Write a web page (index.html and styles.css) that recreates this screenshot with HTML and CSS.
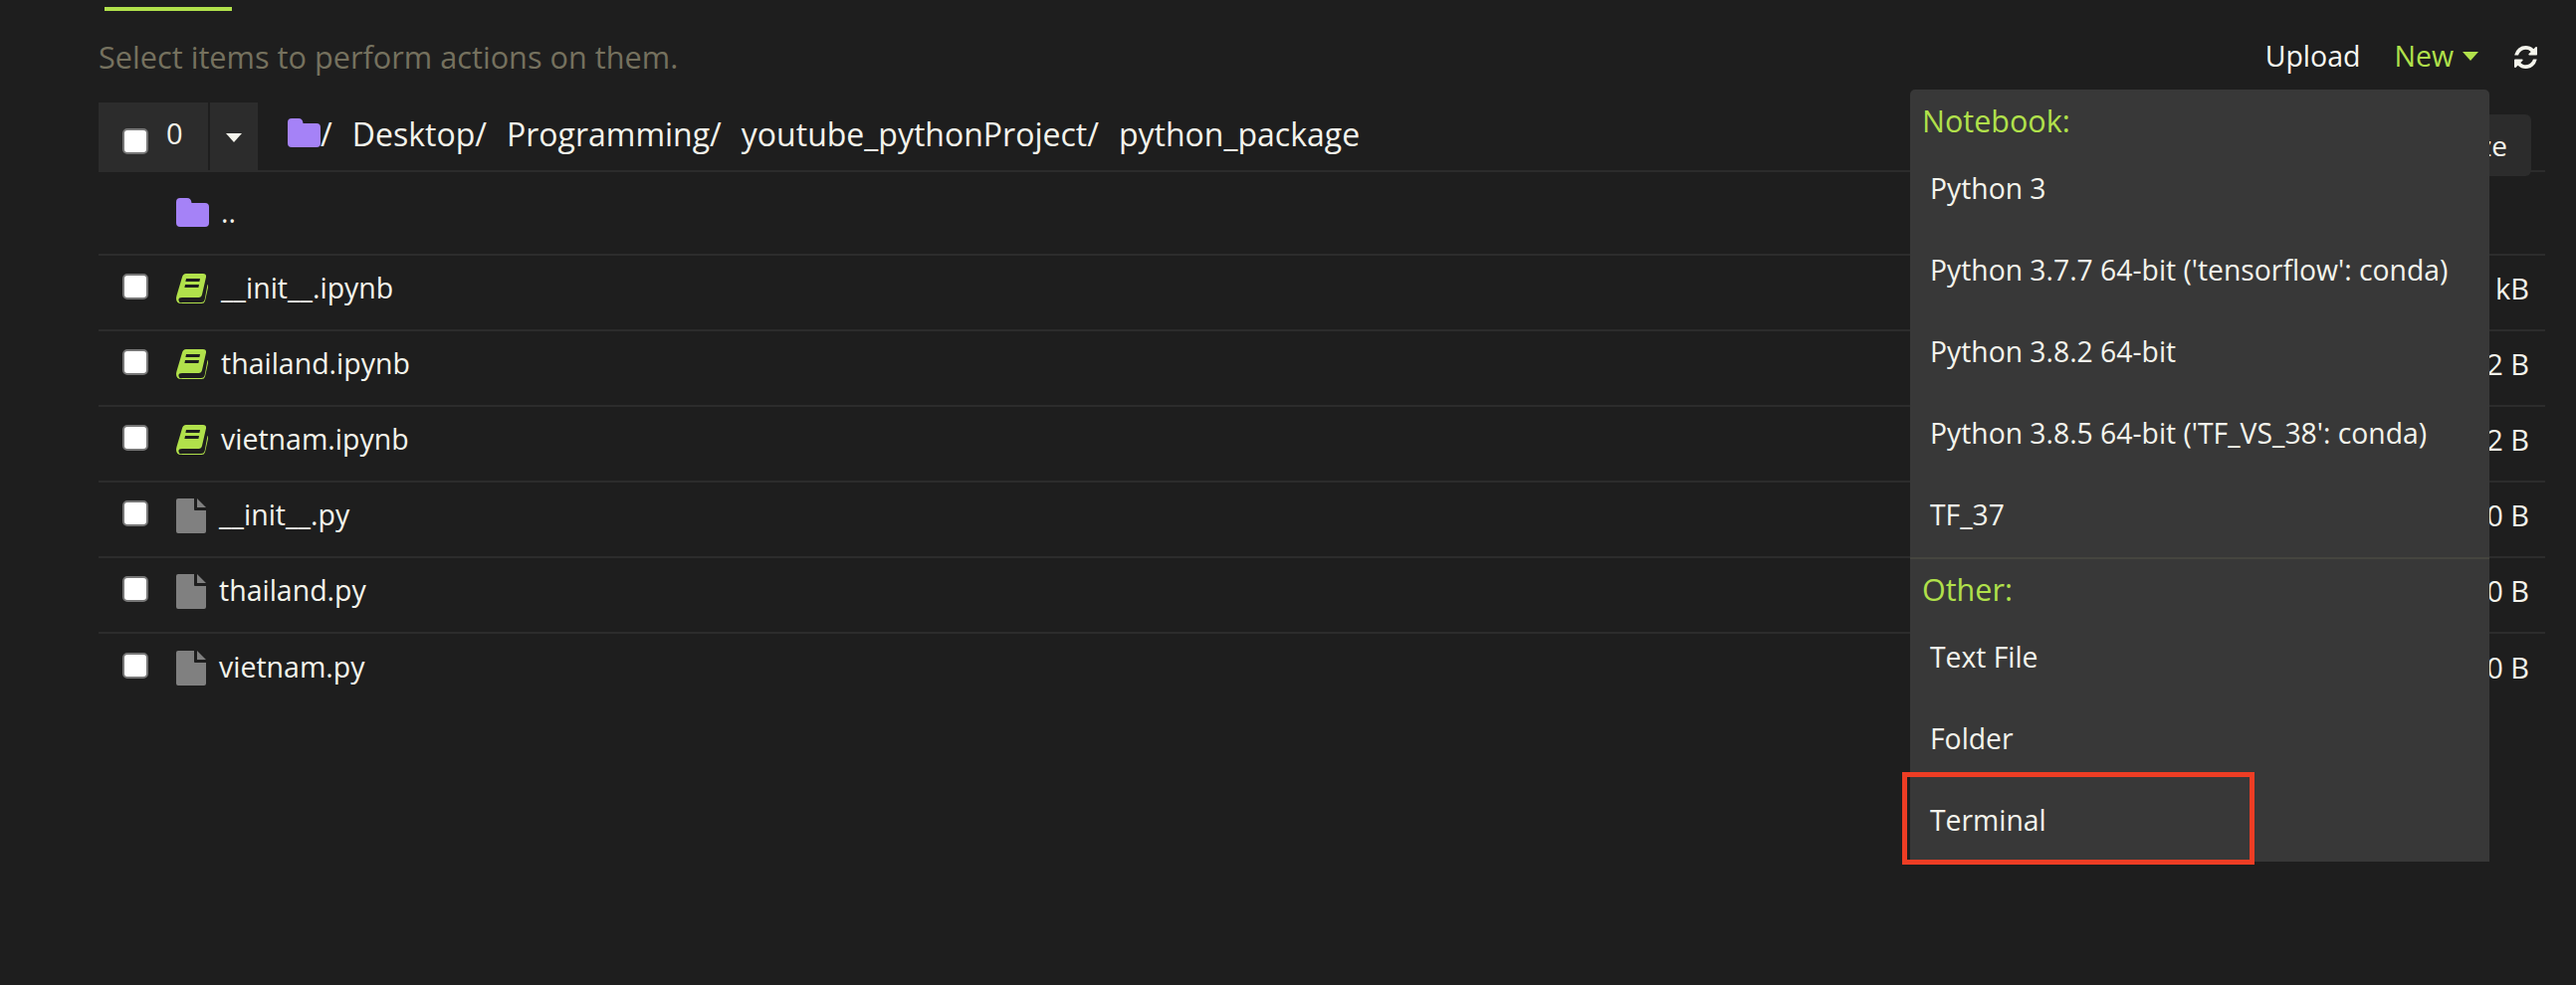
FILE: index.html
```html
<!DOCTYPE html>
<html lang="en">
<head>
<meta charset="utf-8">
<title>Files</title>
<link rel="stylesheet" href="styles.css">
</head>
<body>
<div class="page">
  <div class="tabs"><span class="tab-active"></span></div>
  <div class="toolbar">
    <span class="hint">Select items to perform actions on them.</span>
    <div class="actions">
      <span class="action">Upload</span>
      <span class="action new">New<span class="caret caret-green"></span></span>
      <svg class="refresh" viewBox="0 0 1536 1536"><path fill="#f4f4ec" d="M1511 928q0 5-1 7-64 268-268 434.500t-478 166.500q-146 0-282.500-55t-243.500-157l-129 129q-19 19-45 19t-45-19-19-45v-448q0-26 19-45t45-19h448q26 0 45 19t19 45-19 45l-137 137q71 66 161 102t187 36q134 0 250-65t186-179q11-17 53-117 8-23 30-23h192q13 0 22.500 9.500t9.500 22.500zm25-800v448q0 26-19 45t-45 19h-448q-26 0-45-19t-19-45 19-45l138-138q-148-137-349-137-134 0-250 65t-186 179q-11 17-53 117-8 23-30 23h-199q-13 0-22.500-9.500t-9.500-22.500v-7q65-268 270-434.500t480-166.500q146 0 284 55.500t245 156.500l130-129q19-19 45-19t45 19 19 45z"/></svg>
    </div>
  </div>
  <div class="list">
    <div class="head">
      <div class="select-box"><input type="checkbox" class="check head-check"><span class="count">0</span></div>
      <div class="select-caret"><span class="caret"></span></div>
      <div class="crumbs">
        <svg class="folder crumb-folder" viewBox="0 0 33 29"><path fill="#a582f7" d="M4 0h7q4 0 4.500 5H29q4 0 4 4v16q0 4-4 4H4q-4 0-4-4V4q0-4 4-4z"/></svg>
        <span class="crumb first">/</span><span class="crumb">Desktop/</span><span class="crumb">Programming/</span><span class="crumb">youtube_pythonProject/</span><span class="crumb">python_package</span>
      </div>
      <div class="name-btn">Size</div>
    </div>
    <div class="row up-row">
      <svg class="folder" viewBox="0 0 33 29"><path fill="#a582f7" d="M4 0h7q4 0 4.500 5H29q4 0 4 4v16q0 4-4 4H4q-4 0-4-4V4q0-4 4-4z"/></svg>
      <span class="name">..</span>
    </div>
    <div class="row"><input type="checkbox" class="check"><svg class="book" viewBox="0 0 32 31"><path fill="#b1e14b" d="M10 0h17q3.500 0 3 3.500L26 21q-.6 3-3.500 3H6q-4 0-3.500 3t3.500 2h19q3 0 3.700-3l2.800-15 1 .8-3.500 15.700q-.8 2.500-3.500 2.500H5q-5 0-5-5 0-1 .5-3L6 3.500Q6.800 0 10 0z"/><path fill="#1e1e1e" d="M10 5h14l-.6 3h-14zM9 11h14l-.6 3H8.400z"/></svg><span class="name nb">__init__.ipynb</span><span class="size">3 kB</span></div>
    <div class="row"><input type="checkbox" class="check"><svg class="book" viewBox="0 0 32 31"><path fill="#b1e14b" d="M10 0h17q3.500 0 3 3.500L26 21q-.6 3-3.500 3H6q-4 0-3.500 3t3.500 2h19q3 0 3.700-3l2.800-15 1 .8-3.500 15.700q-.8 2.500-3.500 2.500H5q-5 0-5-5 0-1 .5-3L6 3.500Q6.800 0 10 0z"/><path fill="#1e1e1e" d="M10 5h14l-.6 3h-14zM9 11h14l-.6 3H8.400z"/></svg><span class="name nb">thailand.ipynb</span><span class="size">72 B</span></div>
    <div class="row"><input type="checkbox" class="check"><svg class="book" viewBox="0 0 32 31"><path fill="#b1e14b" d="M10 0h17q3.500 0 3 3.500L26 21q-.6 3-3.500 3H6q-4 0-3.500 3t3.500 2h19q3 0 3.700-3l2.800-15 1 .8-3.500 15.700q-.8 2.500-3.500 2.500H5q-5 0-5-5 0-1 .5-3L6 3.500Q6.800 0 10 0z"/><path fill="#1e1e1e" d="M10 5h14l-.6 3h-14zM9 11h14l-.6 3H8.400z"/></svg><span class="name nb">vietnam.ipynb</span><span class="size">72 B</span></div>
    <div class="row"><input type="checkbox" class="check"><svg class="file" viewBox="0 0 30 35"><path fill="#808080" d="M2 0h16v11q0 1 1 1h11v21q0 2-2 2H2q-2 0-2-2V2q0-2 2-2zM21 0l9 9h-9z"/></svg><span class="name">__init__.py</span><span class="size">0 B</span></div>
    <div class="row"><input type="checkbox" class="check"><svg class="file" viewBox="0 0 30 35"><path fill="#808080" d="M2 0h16v11q0 1 1 1h11v21q0 2-2 2H2q-2 0-2-2V2q0-2 2-2zM21 0l9 9h-9z"/></svg><span class="name">thailand.py</span><span class="size">0 B</span></div>
    <div class="row last"><input type="checkbox" class="check"><svg class="file" viewBox="0 0 30 35"><path fill="#808080" d="M2 0h16v11q0 1 1 1h11v21q0 2-2 2H2q-2 0-2-2V2q0-2 2-2zM21 0l9 9h-9z"/></svg><span class="name">vietnam.py</span><span class="size">0 B</span></div>
  </div>
</div>
<div class="menu">
  <div class="menu-head">Notebook:</div>
  <div class="menu-item">Python 3</div>
  <div class="menu-item">Python 3.7.7 64-bit ('tensorflow': conda)</div>
  <div class="menu-item">Python 3.8.2 64-bit</div>
  <div class="menu-item">Python 3.8.5 64-bit ('TF_VS_38': conda)</div>
  <div class="menu-item">TF_37</div>
  <div class="menu-sep"></div>
  <div class="menu-head other">Other:</div>
  <div class="menu-item">Text File</div>
  <div class="menu-item">Folder</div>
  <div class="menu-item">Terminal</div>
</div>
<div class="highlight"></div>
</body>
</html>
```
FILE: styles.css
```css
* { box-sizing: border-box; }
html, body { margin: 0; height: 100%; }
body {
  background: #1e1e1e;
  color: #f4f4ec;
  font-family: "Open Sans", "Noto Sans", sans-serif;
  font-size: 29px;
  font-weight: 400;
  overflow: hidden;
  position: relative;
}
.page { padding: 0 31px 0 99px; }
.tabs { height: 11px; padding: 7px 0 0 6px; }
.tab-active { display: block; width: 128px; height: 4px; background: #b1e14b; }
.toolbar { height: 92px; display: flex; align-items: center; justify-content: space-between; }
.hint { color: #75715e; font-size: 30.700px; }
.actions { display: flex; align-items: center; margin-right: 8px; margin-bottom: 2px; }
.action { color: #f8f8f2; font-size: 28.500px; }
.new { color: #b1e14b; margin-left: 34px; display: flex; align-items: center; }
.caret { display: block; width: 0; height: 0; border-left: 8px solid transparent; border-right: 8px solid transparent; border-top: 9px solid #f4f4ec; }
.caret-green { border-top-color: #b1e14b; margin-left: 9px; }
.refresh { width: 23px; height: 23px; margin-left: 36px; margin-top: 2px; }
.list { position: relative; }
.head { height: 70px; display: flex; border-bottom: 2px solid #2c2c2c; }
.select-box { width: 110px; height: 70px; background: #2c2c2c; display: flex; padding-left: 24px; }
.select-caret { width: 48px; height: 70px; margin-left: 2px; background: #2c2c2c; display: flex; align-items: center; justify-content: center; }
.check { appearance: none; width: 26px; height: 26px; margin: 0; background: #fff; border: 2px solid #767676; border-radius: 5px; flex: none; }
.head-check { margin-top: 26px; }
.count { margin-left: 18px; line-height: 62px; font-size: 29px; }
.crumbs { display: flex; align-items: flex-start; padding-left: 30px; flex: 1; line-height: 64px; font-size: 32px; }
.crumb-folder { margin-top: 16px; }
.folder { width: 33px; height: 29px; flex: none; }
.crumb { margin-right: 20px; }
.name-btn { width: 180px; height: 62px; margin: 12px 14px 0 0; background: #2c2c2c; border-radius: 6px; line-height: 62px; text-align: right; padding-right: 24px; font-size: 28px; flex: none; }
.row { height: 76px; display: flex; align-items: center; padding: 0 16px 0 24px; border-bottom: 2px solid #2c2c2c; }
.row.last { border-bottom: 0; }
.up-row { height: 84px; padding-left: 78px; }
.row .check { margin-right: 28px; margin-top: -12px; }
.up-row .folder { margin-top: -2px; }
.book { width: 32px; height: 31px; flex: none; margin-top: -7px; }
.file { width: 30px; height: 35px; flex: none; margin-top: -7px; }
.name { margin-left: 13px; margin-top: -10px; font-size: 28.500px; }
.up-row .name { margin-left: 12px; margin-top: -3px; }
.size { margin-left: auto; margin-top: -10px; }
.menu { position: absolute; left: 1919px; top: 90px; width: 582px; height: 776px; background: #383838; border-radius: 5px 5px 0 0; padding-top: 4px; }
.menu-head { color: #b1e14b; height: 56px; line-height: 54px; padding-left: 12px; font-size: 30.500px; }
.menu-head.other { height: 59px; line-height: 60px; }
.menu-item { height: 82px; line-height: 78px; padding-left: 20px; font-size: 28.300px; }
.menu-sep { height: 2px; background: #45453f; }
.highlight { position: absolute; left: 1911px; top: 776px; width: 354px; height: 93px; border: 5px solid #ee3d24; }
```
